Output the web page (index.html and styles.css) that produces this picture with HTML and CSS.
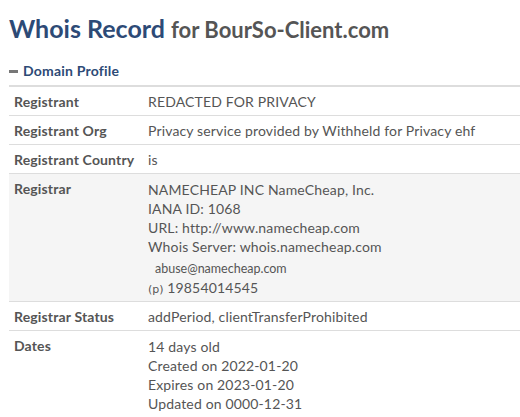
FILE: index.html
```html
<!DOCTYPE html>
<html>
<head>
<meta charset="utf-8">
<link rel="stylesheet" href="styles.css">
</head>
<body>
<div class="page">
  <h1 class="title"><span class="main">Whois Record</span> <span class="sub">for BourSo-Client.com</span></h1>
  <div class="section-head"><span class="minus"></span>Domain Profile</div>
  <table class="profile">
    <tr><td class="lbl">Registrant</td><td class="val">REDACTED FOR PRIVACY</td></tr>
    <tr><td class="lbl">Registrant Org</td><td class="val">Privacy service provided by Withheld for Privacy ehf</td></tr>
    <tr><td class="lbl">Registrant Country</td><td class="val">is</td></tr>
    <tr class="shade"><td class="lbl">Registrar</td><td class="val multi registrar">
      <div>NAMECHEAP INC NameCheap, Inc.</div>
      <div>IANA ID: 1068</div>
      <div>URL: http://www.namecheap.com</div>
      <div>Whois Server: whois.namecheap.com</div>
      <div class="email">abuse@namecheap.com</div>
      <div class="phone"><span class="p">(p)</span> 19854014545</div>
    </td></tr>
    <tr><td class="lbl">Registrar Status</td><td class="val">addPeriod, clientTransferProhibited</td></tr>
    <tr><td class="lbl">Dates</td><td class="val multi">
      <div>14 days old</div>
      <div>Created on 2022-01-20</div>
      <div>Expires on 2023-01-20</div>
      <div>Updated on 0000-12-31</div>
    </td></tr>
  </table>
</div>
</body>
</html>
```

FILE: styles.css
```css
html, body { margin: 0; padding: 0; background: #fff; }
body { font-family: Lato, "Open Sans", sans-serif; color: #555; }
.page { padding: 0 0 0 9px; }
.title { margin: 0; padding-top: 13px; font-size: 25px; line-height: 30px; font-weight: 700; }
.title .main { color: #2d4a76; }
.title .sub { color: #555; font-size: 22px; }
.section-head { margin-top: 18px; font-size: 14px; letter-spacing: 0.2px; font-weight: 700; color: #2d4a76; line-height: 16px; display: flex; align-items: center; }
.minus { display: inline-block; width: 9px; height: 3px; background: #777; margin-right: 5px; }
.profile { width: 100%; border-collapse: collapse; margin-top: 6px; border-top: 2px solid #ddd; font-size: 14px; }
.profile td { border-bottom: 1px solid #ddd; vertical-align: top; padding: 6px 5px 5px 5px; line-height: 17px; letter-spacing: 0.15px; }
.profile .lbl { font-weight: 700; width: 129px; color: #555; }
.profile .val { color: #555; padding-left: 0; }
.shade td { background: #f5f5f5; }
.profile .multi { line-height: 19px; padding-top: 6px; padding-bottom: 4px; }
.profile .registrar { padding-bottom: 2px; }
.multi div { line-height: 19px; }
.email { font-size: 12.5px; letter-spacing: 0; padding-left: 7px; margin-top: 3px; }
.phone .p { font-family: "DejaVu Sans", sans-serif; font-size: 11px; letter-spacing: 0; }
```
